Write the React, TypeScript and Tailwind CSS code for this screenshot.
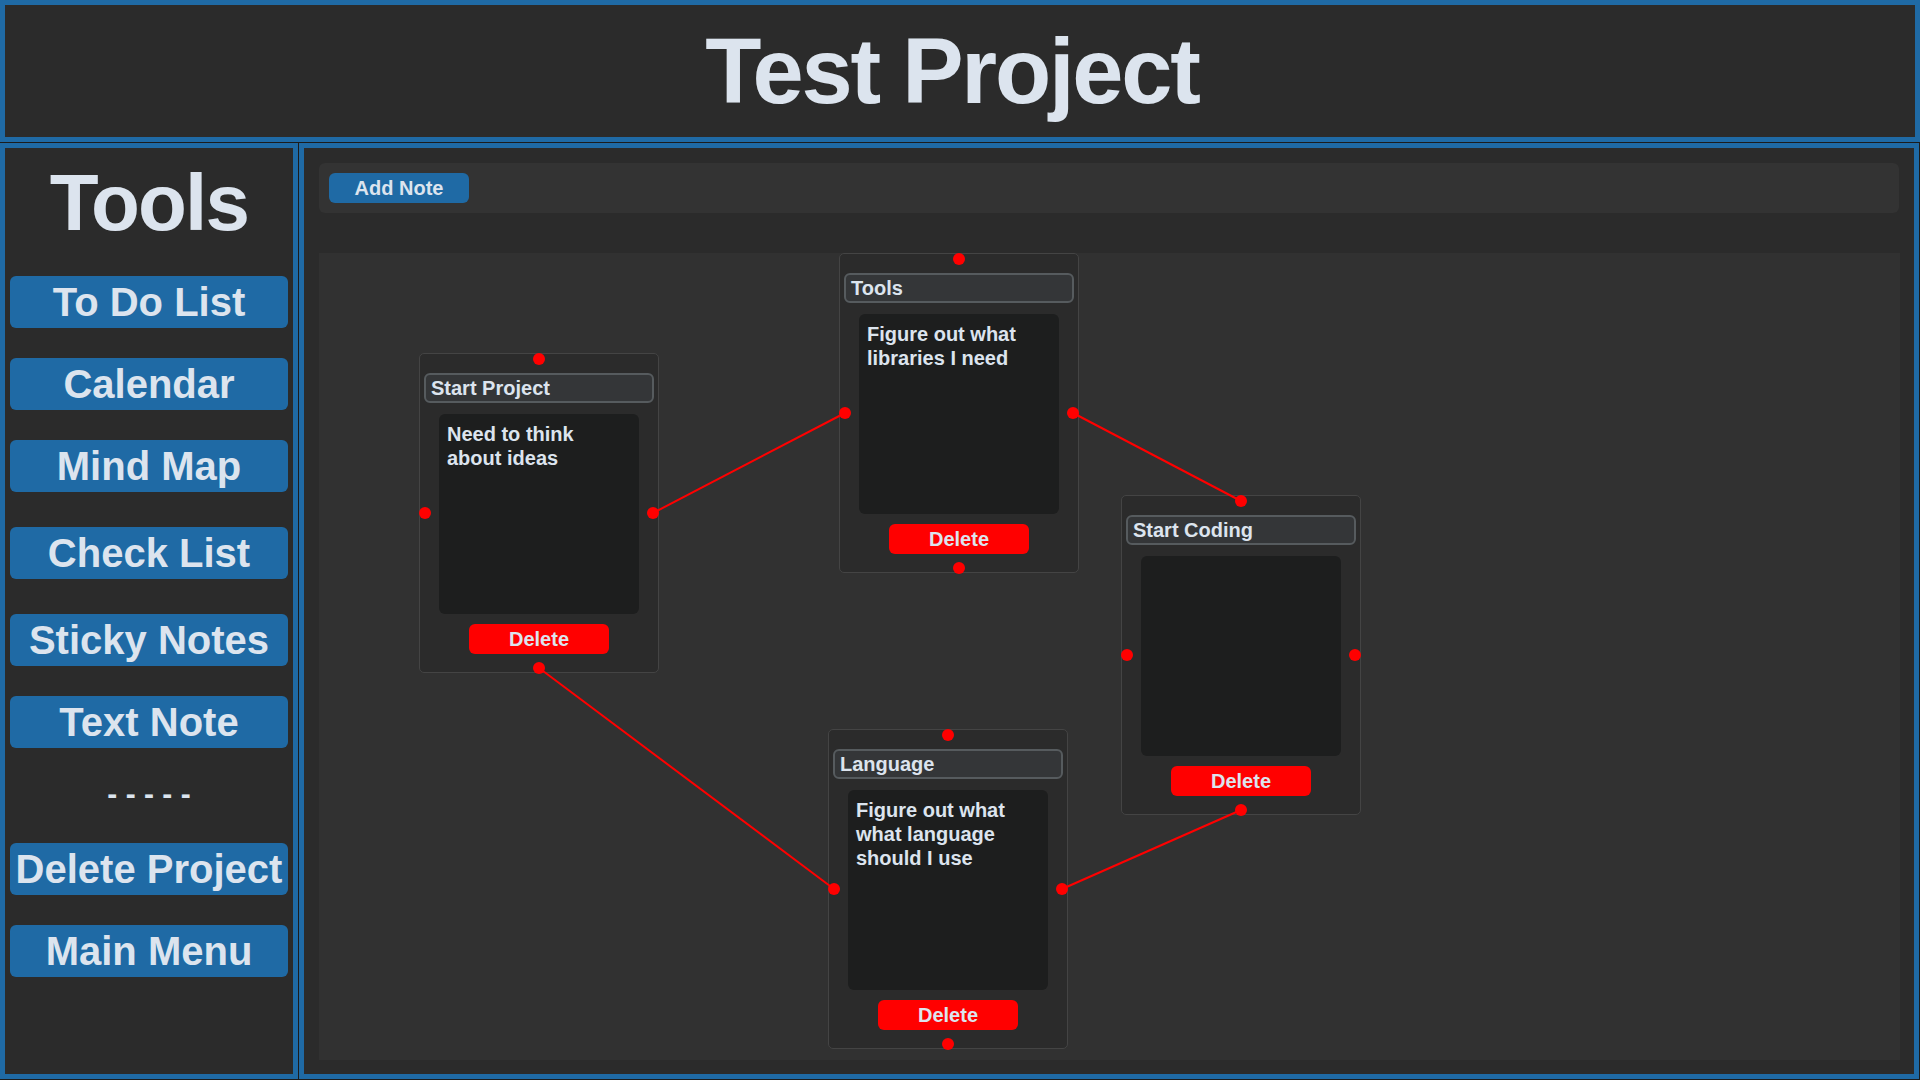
import React from "react";

type Note = { x: number; y: number; title: string; body: string };

const notes: Note[] = [
  { x: 100, y: 100, title: "Start Project", body: "Need to think\nabout ideas" },
  { x: 520, y: 0, title: "Tools", body: "Figure out what\nlibraries I need" },
  { x: 802, y: 242, title: "Start Coding", body: "" },
  { x: 509, y: 476, title: "Language", body: "Figure out what\nwhat language\nshould I use" },
];

const top = (n: Note) => [n.x + 120, n.y + 6];
const left = (n: Note) => [n.x + 6, n.y + 160];
const right = (n: Note) => [n.x + 234, n.y + 160];
const bottom = (n: Note) => [n.x + 120, n.y + 315];

const links: number[][][] = [
  [right(notes[0]), left(notes[1])],
  [right(notes[1]), top(notes[2])],
  [bottom(notes[0]), left(notes[3])],
  [right(notes[3]), bottom(notes[2])],
];

function Dot({ cls }: { cls: string }) {
  return <div className={"absolute w-[12px] h-[12px] rounded-full bg-[#ff0000] " + cls} />;
}

function NoteCard({ n }: { n: Note }) {
  return (
    <div
      className="absolute w-[240px] h-[320px] bg-[#2b2b2b] border border-[#444444] rounded-[5px]"
      style={{ left: n.x, top: n.y }}
    >
      <Dot cls="left-[113px] top-[-1px]" />
      <Dot cls="left-[-1px] top-[153px]" />
      <Dot cls="left-[227px] top-[153px]" />
      <Dot cls="left-[113px] top-[308px]" />
      <div className="absolute left-[4px] top-[19px] w-[230px] h-[30px] rounded-[6px] border-2 border-[#565b5e] bg-[#343638] flex items-center pl-[5px] text-[20px] font-bold text-[#dce4ee] leading-none">
        {n.title}
      </div>
      <div className="absolute left-[19px] top-[60px] w-[200px] h-[200px] rounded-[6px] bg-[#1d1e1e] pl-[8px] pt-[8px] text-[20px] leading-[24px] font-bold text-[#dce4ee] whitespace-pre-line">
        {n.body}
      </div>
      <div className="absolute left-[49px] top-[270px] w-[140px] h-[30px] rounded-[6px] bg-[#ff0000] flex items-center justify-center text-[20px] font-bold text-[#dce4ee] leading-none">
        Delete
      </div>
    </div>
  );
}

function SideBtn({ label, cls }: { label: string; cls?: string }) {
  return (
    <div
      className={
        "mx-[5px] h-[52px] rounded-[6px] bg-[#1f6aa5] flex items-center justify-center text-[40px] font-bold text-[#dce4ee] leading-none " +
        (cls || "")
      }
    >
      {label}
    </div>
  );
}

export default function App() {
  return (
    <div className="w-[1920px] h-[1080px] bg-[#1c1c1c] flex flex-col gap-px pb-px font-['Liberation_Sans',Arial,sans-serif] overflow-hidden">
      <div className="h-[142px] shrink-0 border-[5px] border-[#1f6aa5] bg-[#2b2b2b] flex items-center justify-center pr-[16px]">
        <h1 className="text-[92px] font-bold tracking-[-2.2px] text-[#dce4ee] leading-none">Test Project</h1>
      </div>
      <div className="flex-1 flex gap-px pr-px min-h-0">
        <div className="w-[298px] shrink-0 border-[5px] border-[#1f6aa5] bg-[#2b2b2b] flex flex-col">
          <div className="h-[128px] pt-[15px] flex justify-center">
            <span className="text-[80px] font-bold tracking-[-1.8px] text-[#dce4ee] leading-none">Tools</span>
          </div>
          <SideBtn label="To Do List" />
          <SideBtn label="Calendar" cls="mt-[30px]" />
          <SideBtn label="Mind Map" cls="mt-[30px]" />
          <SideBtn label="Check List" cls="mt-[35px]" />
          <SideBtn label="Sticky Notes" cls="mt-[35px]" />
          <SideBtn label="Text Note" cls="mt-[30px]" />
          <div className="h-[95px] flex items-center justify-center text-[30px] font-bold text-[#dce4ee] leading-none pb-[4px]">
            - - - - -
          </div>
          <SideBtn label="Delete Project" />
          <SideBtn label="Main Menu" cls="mt-[30px]" />
        </div>
        <div className="flex-1 border-[5px] border-[#1f6aa5] bg-[#2b2b2b] flex flex-col">
          <div className="mt-[15px] mx-[15px] h-[50px] rounded-[6px] bg-[#333333] flex items-center px-[10px]">
            <div className="w-[140px] h-[30px] rounded-[6px] bg-[#1f6aa5] flex items-center justify-center text-[20px] font-bold text-[#dce4ee] leading-none">
              Add Note
            </div>
          </div>
          <div className="relative mt-[40px] ml-[15px] w-[1581px] h-[807px] bg-[#313131] overflow-hidden">
            {notes.map((n, i) => (
              <NoteCard key={i} n={n} />
            ))}
            <svg className="absolute inset-0 pointer-events-none" width={1581} height={807}>
              {links.map((l, i) => (
                <line key={i} x1={l[0][0]} y1={l[0][1]} x2={l[1][0]} y2={l[1][1]} stroke="#ff0000" strokeWidth={2} />
              ))}
            </svg>
          </div>
        </div>
      </div>
    </div>
  );
}
